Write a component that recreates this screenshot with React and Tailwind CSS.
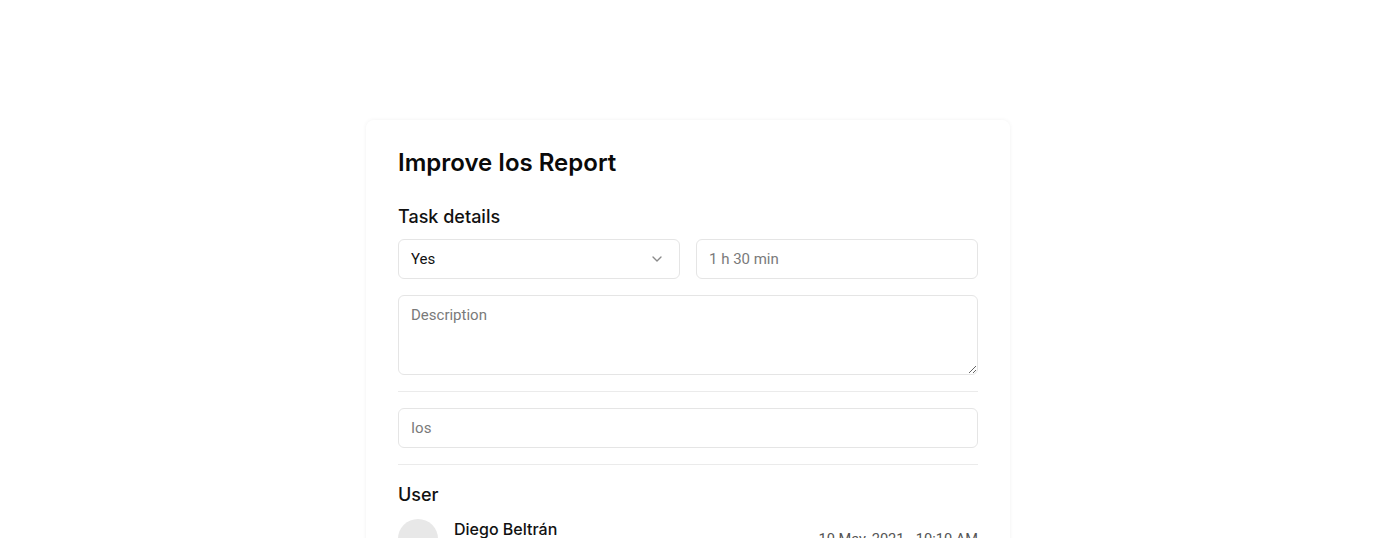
import React from 'react';

const Chevron = () => (
  <svg width="16" height="16" viewBox="0 0 24 24" fill="none" stroke="#8a8a8a" strokeWidth="2" strokeLinecap="round" strokeLinejoin="round">
    <path d="m6 9 6 6 6-6" />
  </svg>
);

const App = () => {
  return (
    <div className="h-[538px] overflow-hidden bg-white font-['Roboto',sans-serif]">
      <div className="mx-auto mt-[120px] w-[644px] rounded-lg bg-white px-8 pt-[29px] pb-8 shadow-[0_0_4px_rgba(0,0,0,0.06)]">
        <h1 className="font-['Inter',sans-serif] text-2xl leading-7 font-semibold text-[#0a0a0a]">Improve Ios Report</h1>

        <h2 className="mt-[26px] font-['Inter',sans-serif] text-lg leading-7 font-medium text-[#111]">Task details</h2>

        <div className="mt-2 grid grid-cols-2 gap-4">
          <div className="flex h-10 items-center justify-between rounded-md border border-[#e5e5e5] pr-[14px] pl-3 text-[15px] text-[#111]">
            <span>Yes</span>
            <Chevron />
          </div>
          <input
            className="h-10 rounded-md border border-[#e5e5e5] px-3 text-[15px] text-[#111] placeholder:text-[#7a7a7a] outline-none"
            placeholder="1 h 30 min"
          />
        </div>

        <textarea
          className="mt-4 block h-20 w-full rounded-md border border-[#e5e5e5] px-3 py-2 text-[15px] text-[#111] placeholder:text-[#7a7a7a] outline-none"
          placeholder="Description"
        />

        <div className="my-4 h-px bg-[#ebebeb]" />

        <input
          className="block h-10 w-full rounded-md border border-[#e5e5e5] px-3 text-[15px] text-[#111] placeholder:text-[#7a7a7a] outline-none"
          placeholder="Ios"
        />

        <div className="mt-4 h-px bg-[#ebebeb]" />

        <h2 className="mt-4 font-['Inter',sans-serif] text-lg leading-7 font-medium text-[#111]">User</h2>

        <div className="mt-[10px] flex items-start gap-4">
          <div className="h-10 w-10 shrink-0 rounded-full bg-[#e8e8e8]" />
          <div className="flex flex-1 items-start justify-between">
            <div className="font-['Inter',sans-serif] text-base leading-5 font-medium text-[#111]">Diego Beltrán</div>
            <div className="mt-[10px] text-[14.6px] text-[#555]">10 May, 2021 - 10:10 AM</div>
          </div>
        </div>
      </div>
    </div>
  );
};

export default App;
